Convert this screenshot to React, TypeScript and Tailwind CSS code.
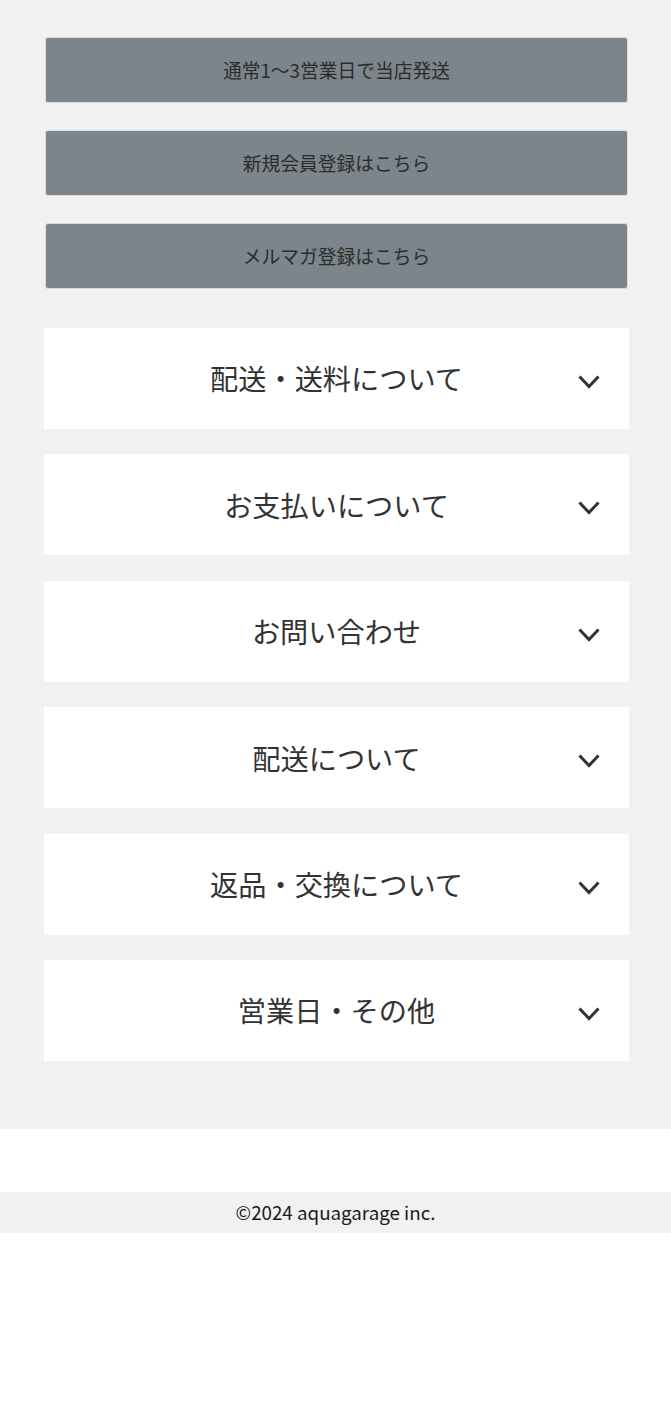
import React from "react";

const buttons = ["通常1〜3営業日で当店発送", "新規会員登録はこちら", "メルマガ登録はこちら"];
const items = ["配送・送料について", "お支払いについて", "お問い合わせ", "配送について", "返品・交換について", "営業日・その他"];

function Chevron() {
  return (
    <svg width="22" height="16" viewBox="0 0 22 16" className="absolute right-[29px] top-[47px]">
      <path d="M1.5 1.5 L11 11.5 L20.5 1.5" fill="none" stroke="#333333" strokeWidth="3" strokeLinecap="butt" strokeLinejoin="miter" />
    </svg>
  );
}

export default function App() {
  return (
    <div className="min-h-[1420px] bg-white text-[#333333]" style={{ fontFamily: '"Noto Sans CJK JP", "Noto Sans", sans-serif' }}>
      <div className="bg-[#f1f1f1] pl-[44px] pr-[42px] pt-[37px] pb-[68px]">
        <div className="flex flex-col gap-[27px] pl-[1px] pr-[1px]">
          {buttons.map((b) => (
            <div key={b} className="h-[66px] flex items-center justify-center rounded-[3px] bg-[#7c858c] border border-[#d9dbdc] text-[18.75px] text-[#2b2b2b]">
              {b}
            </div>
          ))}
        </div>
        <div className="mt-[39px] flex flex-col gap-[25.4px]">
          {items.map((t) => (
            <div key={t} className="relative h-[101px] bg-white flex items-center justify-center text-[28.2px] text-[#333333]">
              <span>{t}</span>
              <Chevron />
            </div>
          ))}
        </div>
      </div>
      <div className="h-[63px] bg-white" />
      <div className="h-[41px] bg-[#f1f1f1] flex items-center justify-center text-[18.75px] text-[#1a1a1a]">
        ©2024 aquagarage inc.
      </div>
    </div>
  );
}
